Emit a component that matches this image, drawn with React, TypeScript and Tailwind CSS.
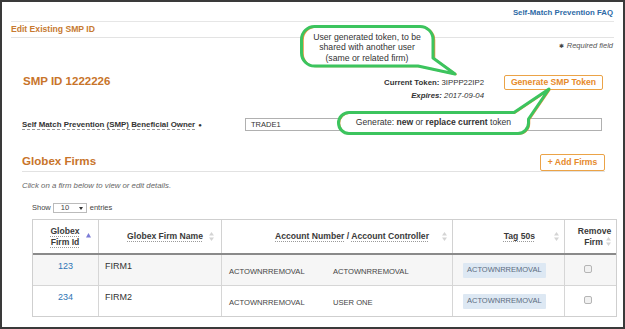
import type { FC, ReactNode } from "react";

const SortIcon: FC<{ className?: string }> = ({ className }) => (
  <svg width="5" height="9" viewBox="0 0 5 9" className={"shrink-0 " + (className ?? "")}>
    <path d="M2.5 0 L5 3.5 H0 Z" fill="#d4d4d4" />
    <path d="M2.5 9 L5 5.5 H0 Z" fill="#d4d4d4" />
  </svg>
);

const HeadText: FC<{ children: ReactNode }> = ({ children }) => (
  <span className="underline decoration-dotted decoration-[#9a9a9a] underline-offset-[2px]">{children}</span>
);

const Checkbox: FC = () => (
  <div className="w-[8px] h-[8px] border border-[#b5b5b5] rounded-[2px] bg-[#f1f1f1]" />
);

const Badge: FC<{ children: ReactNode }> = ({ children }) => (
  <span className="inline-flex items-center h-[15px] px-[4px] bg-[#dde8f3] text-[#5c6c80] text-[7.5px] leading-none rounded-[1px]">
    {children}
  </span>
);

const firms = [
  { id: "123", name: "FIRM1", account: "ACTOWNRREMOVAL", controller: "ACTOWNRREMOVAL", tag: "ACTOWNRREMOVAL" },
  { id: "234", name: "FIRM2", account: "ACTOWNRREMOVAL", controller: "USER ONE", tag: "ACTOWNRREMOVAL" },
];

export default function App() {
  return (
    <div className="w-[625px] h-[329px] bg-white border-2 border-[#3a3a3a] relative overflow-hidden font-['Liberation_Sans',Arial,sans-serif] text-[#333]">
      <div className="px-[9px]">
        {/* top link */}
        <div className="h-[20px] border-b border-[#e6e6e6] flex items-center justify-end pt-[3px] pr-[1px]">
          <a className="text-[7.8px] font-bold text-[#2d6aa6] leading-none">Self-Match Prevention FAQ</a>
        </div>
        <div className="h-[16px] border-b border-[#e3e3e3] flex items-center">
          <span className="text-[8.6px] font-bold text-[#c77a31] leading-none">Edit Existing SMP ID</span>
        </div>
        <div className="h-[16px] flex items-center justify-end pr-[1px] text-[7.5px] italic text-[#555] leading-none">
          <span className="not-italic text-[6px] mr-[3px] text-[#444]">✱</span>Required field
        </div>

        {/* smp id + token */}
        <div className="flex items-start pt-[21px]">
          <div className="flex-1 pl-[12px] text-[11.5px] font-bold text-[#c8742a] leading-[12px]">SMP ID 1222226</div>
          <div className="pt-[1px] text-right text-[7.8px] leading-[13px] text-[#333]">
            <div>
              <b>Current Token:</b> 3IPPP22IP2
            </div>
            <div className="italic">
              <b>Expires:</b> 2017-09-04
            </div>
          </div>
          <button className="ml-[20px] mr-[11px] h-[15px] w-[99px] border border-[#eba347] rounded-[2px] text-[8.6px] font-bold text-[#e68a2c] leading-none">
            Generate SMP Token
          </button>
        </div>

        {/* beneficial owner */}
        <div className="mt-[16px] h-[13px] flex items-center">
          <div className="w-[234px] pl-[11px] text-[7.9px] font-bold text-[#333] leading-none">
            <span className="underline decoration-dashed decoration-[#999] underline-offset-[2px]">
              Self Match Prevention (SMP) Beneficial Owner
            </span>
            <span className="ml-[3px] text-[6px]">●</span>
          </div>
          <div className="w-[357px] h-[13px] border border-[#b0b0b0] flex items-center pl-[5px] text-[7.5px] text-[#333]">
            TRADE1
          </div>
        </div>

        {/* globex firms */}
        <div className="ml-[11px] mr-[9px] mt-[23px]">
          <div className="h-[18px] border-b border-[#e2e2e2] flex items-start justify-between">
            <div className="text-[11.6px] font-bold text-[#c8742a] leading-[14px]">Globex Firms</div>
            <button className="h-[17px] w-[65px] border-[1.5px] border-[#eba347] rounded-[2px] text-[8.6px] font-bold text-[#e68a2c] leading-none">
              + Add Firms
            </button>
          </div>
          <div className="mt-[9px] text-[7.8px] italic text-[#666] leading-[10px]">
            Click on a firm below to view or edit details.
          </div>
          <div className="mt-[12px] h-[10px] pl-[10px] flex items-center text-[7.5px] text-[#444] leading-none">
            <span>Show</span>
            <div className="ml-[2px] w-[34px] h-[10px] border border-[#bbb] flex items-center justify-between pl-[7px] pr-[3px]">
              <span>10</span>
              <svg width="4" height="3" viewBox="0 0 4 3">
                <path d="M0 0 H4 L2 3 Z" fill="#333" />
              </svg>
            </div>
            <span className="ml-[3px]">entries</span>
          </div>

          {/* table */}
          <div className="mt-[6px] ml-[10px] w-[585px] border border-[#cfcfcf]">
            <div className="h-[35px] grid grid-cols-[66px_123px_231px_112px_51px] border-b-2 border-[#8a8a8a] text-[8.6px] font-bold text-[#3a3a3a] leading-[10.6px]">
              <div className="border-r border-[#d2d2d2] flex items-center justify-center pl-[10px] gap-[6px]">
                <div className="text-center">
                  <HeadText>Globex</HeadText>
                  <br />
                  <HeadText>Firm Id</HeadText>
                </div>
                <svg width="5" height="5" viewBox="0 0 5 5" className="mb-[3px]">
                  <path d="M2.5 0 L5 4.5 H0 Z" fill="#7b7bd6" />
                </svg>
              </div>
              <div className="border-r border-[#d2d2d2] flex items-center justify-end pr-[7px] gap-[6px]">
                <HeadText>Globex Firm Name</HeadText>
                <SortIcon />
              </div>
              <div className="border-r border-[#d2d2d2] flex items-center justify-end pr-[5px] gap-[13px]">
                <span>
                  <HeadText>Account Number</HeadText> / <HeadText>Account Controller</HeadText>
                </span>
                <SortIcon />
              </div>
              <div className="border-r border-[#d2d2d2] flex items-center justify-end pr-[5px] gap-[19px]">
                <HeadText>Tag 50s</HeadText>
                <SortIcon />
              </div>
              <div className="flex flex-col items-center justify-center pl-[8px] text-center">
                <span>Remove</span>
                <span className="flex items-center gap-[3px] pl-[6px]">
                  Firm
                  <SortIcon />
                </span>
              </div>
            </div>
            {firms.map((f, i) => (
              <div
                key={f.id}
                className={
                  "grid grid-cols-[66px_123px_231px_112px_51px] " +
                  (i === 0 ? "h-[31px] border-b border-[#d6d6d6] bg-[#f6f6f6]" : "h-[30px] bg-white")
                }
              >
                <div className="border-r border-[#d6d6d6] pt-[6px] text-center text-[9px] leading-[10px] text-[#2f74b5]">
                  {f.id}
                </div>
                <div className="border-r border-[#d6d6d6] pt-[6px] pl-[6px] text-[9px] leading-[10px] text-[#333]">
                  {f.name}
                </div>
                <div className="border-r border-[#d6d6d6] flex items-center pt-[4px] pl-[7px] text-[7.6px] text-[#444] leading-none">
                  <span className="w-[104px]">{f.account}</span>
                  <span>{f.controller}</span>
                </div>
                <div className="border-r border-[#d6d6d6] flex items-center pl-[10px]">
                  <Badge>{f.tag}</Badge>
                </div>
                <div className="pt-[10px] pl-[19px]">
                  <Checkbox />
                </div>
              </div>
            ))}
          </div>
        </div>
      </div>

      {/* callout: token note */}
      <svg width="175" height="60" viewBox="0 0 175 60" className="absolute left-[288px] top-[18px] pointer-events-none">
        <path
          d="M24.5,6.5 H130 A13,13 0 0 1 143,19.5 V38 L165,54 L128,46 H24.5 A13,13 0 0 1 11.5,33 V19.5 A13,13 0 0 1 24.5,6.5 Z"
          fill="white"
          stroke="#e8913a"
          strokeWidth="1.5"
          transform="translate(1.5 0.5)"
        />
        <path
          d="M24.5,6.5 H130 A13,13 0 0 1 143,19.5 V38 L165,54 L128,46 H24.5 A13,13 0 0 1 11.5,33 V19.5 A13,13 0 0 1 24.5,6.5 Z"
          fill="none"
          stroke="#3cc45e"
          strokeWidth="3"
          strokeLinejoin="round"
        />
      </svg>
      <div className="absolute left-[300px] top-[30px] w-[130px] text-center text-[8.7px] leading-[10.3px] text-[#333]">
        User generated token, to be
        <br />
        shared with another user
        <br />
        (same or related firm)
      </div>

      {/* callout: generate note */}
      <svg width="225" height="56" viewBox="0 0 225 56" className="absolute left-[330px] top-[82px] pointer-events-none">
        <path
          d="M17,28.5 H182 L217,5 L196.5,35 V39 A10.5,10.5 0 0 1 186,49.5 H17 A10.5,10.5 0 0 1 6.5,39 A10.5,10.5 0 0 1 17,28.5 Z"
          fill="white"
          stroke="#e8913a"
          strokeWidth="1.5"
          transform="translate(1 0.5)"
        />
        <path
          d="M17,28.5 H182 L217,5 L196.5,35 V39 A10.5,10.5 0 0 1 186,49.5 H17 A10.5,10.5 0 0 1 6.5,39 A10.5,10.5 0 0 1 17,28.5 Z"
          fill="none"
          stroke="#3cc45e"
          strokeWidth="3"
          strokeLinejoin="round"
        />
      </svg>
      <div className="absolute left-[336px] top-[115px] w-[191px] text-center text-[8.6px] leading-[11px] text-[#333]">
        Generate: <b>new</b> or <b>replace current</b> token
      </div>
    </div>
  );
}
